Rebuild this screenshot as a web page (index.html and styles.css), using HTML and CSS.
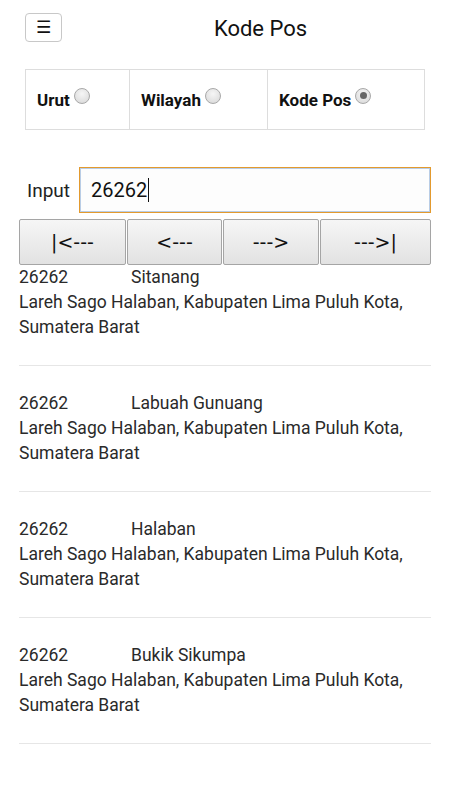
FILE: index.html
```html
<!DOCTYPE html>
<html>
<head>
<meta charset="utf-8">
<link rel="stylesheet" href="styles.css">
</head>
<body>
<div class="page">
  <header class="header">
    <button class="menu-btn">☰</button>
    <h1 class="title">Kode Pos</h1>
  </header>

  <div class="options">
    <label class="opt opt-urut">Urut <span class="radio"></span></label>
    <label class="opt opt-wil">Wilayah <span class="radio"></span></label>
    <label class="opt opt-kode">Kode Pos <span class="radio checked"></span></label>
  </div>

  <div class="input-row">
    <span class="input-label">Input</span>
    <div class="input-box"><span class="input-text">26262</span><span class="caret"></span></div>
  </div>

  <div class="nav">
    <button class="nav-btn">|&lt;---</button>
    <button class="nav-btn">&lt;---</button>
    <button class="nav-btn">---&gt;</button>
    <button class="nav-btn">---&gt;|</button>
  </div>

  <ul class="results">
    <li class="item">
      <div><span class="code">26262</span><span class="place">Sitanang</span></div>
      <div>Lareh Sago Halaban, Kabupaten Lima Puluh Kota, Sumatera Barat</div>
    </li>
    <li class="item">
      <div><span class="code">26262</span><span class="place">Labuah Gunuang</span></div>
      <div>Lareh Sago Halaban, Kabupaten Lima Puluh Kota, Sumatera Barat</div>
    </li>
    <li class="item">
      <div><span class="code">26262</span><span class="place">Halaban</span></div>
      <div>Lareh Sago Halaban, Kabupaten Lima Puluh Kota, Sumatera Barat</div>
    </li>
    <li class="item">
      <div><span class="code">26262</span><span class="place">Bukik Sikumpa</span></div>
      <div>Lareh Sago Halaban, Kabupaten Lima Puluh Kota, Sumatera Barat</div>
    </li>
  </ul>
</div>
</body>
</html>
```

FILE: styles.css
```css
* { box-sizing: border-box; }
html, body { margin: 0; padding: 0; background: #fff; }
body {
  font-family: Roboto, "Liberation Sans", sans-serif;
  color: #222;
}
.page {
  width: 450px;
  padding: 0 19px;
}
.header {
  display: flex;
  align-items: center;
  height: 56px;
  padding-left: 6px;
}
.menu-btn {
  width: 37px;
  height: 29px;
  margin-top: -2px;
  border: 1px solid #c8c8c8;
  border-radius: 4px;
  background: #fff;
  font-family: "DejaVu Sans", sans-serif;
  font-size: 17px;
  line-height: 1;
  color: #111;
  padding: 0;
}
.title {
  flex: 1;
  margin: 0;
  padding-left: 28px;
  text-align: center;
  font-weight: 400;
  font-size: 22px;
  color: #111;
}
.options {
  display: grid;
  grid-template-columns: 103px 138px 1fr;
  margin: 13px 6px 0 6px;
  border: 1px solid #ddd;
  height: 61px;
}
.opt {
  display: flex;
  align-items: center;
  padding-left: 11px;
  font-weight: 700;
  font-size: 17px;
  color: #111;
  border-left: 1px solid #ddd;
}
.opt:first-child { border-left: none; }
.radio {
  display: inline-block;
  width: 16px;
  height: 16px;
  margin-left: 4px;
  margin-top: -8px;
  border-radius: 50%;
  border: 1px solid #a8a8a8;
  background: radial-gradient(circle at 50% 35%, #f6f6f6, #d6d6d6);
  position: relative;
}
.radio.checked::after {
  content: "";
  position: absolute;
  left: 3.5px; top: 3.5px;
  width: 7px; height: 7px;
  border-radius: 50%;
  background: #666;
}
.input-row {
  display: flex;
  align-items: center;
  margin-top: 37px;
}
.input-label {
  width: 60px;
  padding-left: 8px;
  font-size: 19px;
  color: #222;
}
.input-box {
  flex: 1;
  height: 46px;
  border: 1px solid #e39a2e;
  box-shadow: inset 0 0 0 1px #b9cde6;
  background: #fdfdfd;
  display: flex;
  align-items: center;
  padding-left: 11px;
  font-size: 20px;
  color: #111;
}
.caret {
  display: inline-block;
  width: 1px;
  height: 24px;
  background: #111;
  margin-left: 1px;
}
.nav {
  display: grid;
  grid-template-columns: 107px 95px 96px 111px;
  column-gap: 1px;
  margin-top: 6px;
}
.nav-btn {
  height: 46px;
  border: 1px solid #a5a5a5;
  border-radius: 2px;
  background: linear-gradient(#f6f6f6, #e2e2e2);
  font-family: "DejaVu Sans", sans-serif;
  font-size: 19px;
  color: #111;
  padding: 0;
}
.results {
  list-style: none;
  margin: 0;
  padding: 0;
}
.item {
  font-size: 17.5px;
  line-height: 25px;
  color: #2a2a2a;
  padding-bottom: 25px;
  border-bottom: 1px solid #e6e6e6;
  margin-bottom: 25px;
}
.code {
  display: inline-block;
  width: 112px;
}
```
